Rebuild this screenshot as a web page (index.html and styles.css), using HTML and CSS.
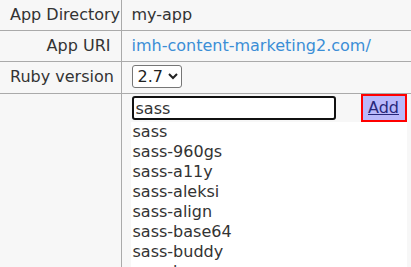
FILE: index.html
```html
<!DOCTYPE html>
<html>

<head>
    <meta charset="UTF-8">
    <meta name="viewport" content="width=device-width, initial-scale=1.0">
    <title>App settings</title>
    <link rel="stylesheet" href="styles.css">
</head>

<body>
    <table class="settings">
        <colgroup>
            <col class="col-label">
            <col class="col-value">
        </colgroup>
        <tr>
            <th>App Directory</th>
            <td>my-app</td>
        </tr>
        <tr>
            <th>App URI</th>
            <td><a href="#">imh-content-marketing2.com/</a></td>
        </tr>
        <tr>
            <th>Ruby version</th>
            <td>
                <select class="version">
                    <option>2.7</option>
                    <option>3.0</option>
                </select>
            </td>
        </tr>
        <tr>
            <th></th>
            <td class="gem-cell">
                <div class="gem-row">
                    <input type="text" class="gem-input" value="sass">
                    <a href="#" class="btn-add">Add</a>
                </div>
                <ul class="suggest">
                    <li>sass</li>
                    <li>sass-960gs</li>
                    <li>sass-a11y</li>
                    <li>sass-aleksi</li>
                    <li>sass-align</li>
                    <li>sass-base64</li>
                    <li>sass-buddy</li>
                    <li>sass-burger</li>
                </ul>
            </td>
        </tr>
    </table>
</body>
</html>
```

FILE: styles.css
```css
* {
    margin: 0;
    padding: 0;
    box-sizing: border-box;
}

body {
    background: #f7f7f7;
    color: #333;
    font-family: "DejaVu Sans", sans-serif;
    font-size: 16px;
    overflow: hidden;
}

.settings {
    border-collapse: collapse;
    table-layout: fixed;
    width: 411px;
}

.col-label {
    width: 121px;
}

.settings th,
.settings td {
    padding: 5px 10px;
    line-height: 20px;
    border-top: 1px solid #aaa;
    vertical-align: top;
}

.settings tr:first-child th,
.settings tr:first-child td {
    border-top: none;
}

.settings th {
    font-weight: normal;
    text-align: right;
    white-space: nowrap;
    border-right: 1px solid #aaa;
}

.settings a {
    color: #3b8ed6;
    text-decoration: none;
}

.version {
    font-family: "DejaVu Sans", sans-serif;
    font-size: 16px;
    height: 23px;
    margin-top: -2px;
    padding: 0 1px;
    color: #222;
    background: #fff;
    border: 1px solid #767676;
    border-radius: 3px;
}

.settings .gem-cell {
    padding: 0 4px 0 9px;
}

.gem-row {
    display: flex;
    align-items: center;
    gap: 25px;
    height: 28px;
}

.gem-input {
    width: 204px;
    height: 24px;
    margin-left: 1px;
    padding: 0 2px;
    font-family: "DejaVu Sans", sans-serif;
    font-size: 16px;
    color: #333;
    background: #fff;
    border: 2px solid #111;
    border-radius: 3px;
    outline: none;
}

.settings .btn-add {
    display: block;
    width: 46px;
    height: 28px;
    padding: 0 4px;
    line-height: 24px;
    text-align: center;
    color: #28287a;
    text-decoration: underline;
    background: #b9b9fa;
    border: 2px solid #f00;
}

.suggest {
    list-style: none;
    width: 276px;
    background: #fff;
}

.suggest li {
    padding-left: 2px;
    line-height: 20px;
}
```
